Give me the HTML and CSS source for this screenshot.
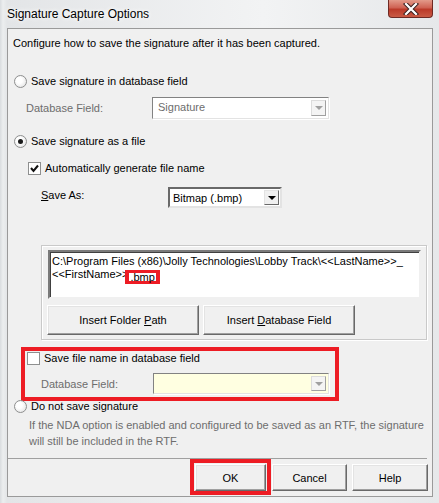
FILE: index.html
```html
<!DOCTYPE html>
<html lang="en">
  <head>
    <meta charset="UTF-8" />
    <title>Signature Capture Options</title>
    <link rel="stylesheet" href="styles.css">
  </head>
  <body>
    <div class="window">
      <div class="titlebar">
        <span class="title">Signature Capture Options</span>
        <div class="closebtn">
          <svg width="16" height="12" viewBox="0 0 16 12">
            <path d="M3 1 L13 11 M13 1 L3 11" stroke="#3a2020" stroke-width="4.2" stroke-linecap="square"/>
            <path d="M3 1 L13 11 M13 1 L3 11" stroke="#fff" stroke-width="2.2" stroke-linecap="square"/>
          </svg>
        </div>
      </div>

      <div class="client">
        <div class="intro">Configure how to save the signature after it has been captured.</div>

        <div class="opt opt1"><span class="radio"></span>Save signature in database field</div>

        <div class="fieldrow dbrow">
          <span class="lbl disabled">Database Field:</span>
          <div class="combo combo-off">
            <span class="val">Signature</span>
            <span class="arrow arrow-off"></span>
          </div>
        </div>

        <div class="opt opt2"><span class="radio on"></span>Save signature as a file</div>

        <div class="chkrow autogen">
          <span class="check">
            <svg width="9" height="9" viewBox="0 0 9 9"><path d="M1 4 L3.5 7 L8 1.5" fill="none" stroke="#111" stroke-width="2"/></svg>
          </span>
          Automatically generate file name
        </div>

        <div class="fieldrow saveas">
          <span class="lbl"><u>S</u>ave As:</span>
          <div class="combo combo-on">
            <span class="val">Bitmap (.bmp)</span>
            <span class="arrow"></span>
          </div>
        </div>

        <div class="group">
          <div class="pathbox">C:\Program Files (x86)\Jolly Technologies\Lobby Track\&lt;&lt;LastName&gt;&gt;_<br>&lt;&lt;FirstName&gt;&gt;<span class="hl">.bmp</span></div>
          <div class="grpbtns">
            <button class="btn wide">Insert Folder <u>P</u>ath</button>
            <button class="btn wide">Insert <u>D</u>atabase Field</button>
          </div>
        </div>

        <div class="redbox dbsave">
          <div class="chkrow"><span class="check"></span>Save file name in database field</div>
          <div class="fieldrow">
            <span class="lbl disabled lbl2">Database Field:</span>
            <div class="combo combo-off combo-yellow">
              <span class="val"></span>
              <span class="arrow arrow-off"></span>
            </div>
          </div>
        </div>

        <div class="opt opt3"><span class="radio"></span>Do not save signature</div>

        <div class="info">If the NDA option is enabled and configured to be saved as an RTF, the signature<br>will still be included in the RTF.</div>

        <div class="sep"></div>

        <div class="footer">
          <div class="redbox okwrap"><button class="btn">OK</button></div>
          <button class="btn cancel">Cancel</button>
          <button class="btn help">Help</button>
        </div>
      </div>
    </div>
  </body>
</html>
```

FILE: styles.css
```css
body {
  margin: 0;
  padding: 0;
  font-family: "Liberation Sans", Arial, sans-serif;
  font-size: 11px;
  color: #000;
}

.window {
  width: 439px;
  height: 503px;
  background: linear-gradient(to right, #d9dcdf 0px, #eceeef 3px, #e3e5e7 7px, #f2f3f4 60%, #e6e8ea 100%);
  overflow: hidden;
}

.titlebar {
  height: 28px;
  display: flex;
  justify-content: space-between;
  align-items: flex-start;
}

.title {
  font-size: 12px;
  margin: 7px 0 0 7px;
  text-shadow: 0 0 6px #fff, 0 0 4px #fff;
}

.closebtn {
  width: 45px;
  height: 18px;
  margin-right: 6px;
  box-sizing: border-box;
  border: 1px solid #6e2a24;
  border-top: none;
  border-radius: 0 0 4px 4px;
  background: linear-gradient(#e39a8a, #cf6253 45%, #bb3a29 55%, #c95a44);
  display: flex;
  align-items: center;
  justify-content: center;
}

.client {
  margin-left: 7px;
  width: 426px;
  height: 469px;
  box-sizing: border-box;
  border: 1px solid #9a9a9a;
  background: #f0f0f0;
}

.intro {
  margin: 7px 0 0 5px;
  line-height: 14px;
}

/* radio rows */
.opt {
  display: flex;
  align-items: center;
  height: 14px;
  margin-left: 6px;
}
.opt1 { margin-top: 24px; }
.opt2 { margin-top: 15px; }
.opt3 { margin-top: -2px; }

.radio {
  width: 11px;
  height: 11px;
  border-radius: 50%;
  border: 1px solid #8e8f8f;
  background: radial-gradient(circle at 40% 40%, #fff 30%, #dcdcdc 100%);
  margin-right: 4px;
  display: flex;
  align-items: center;
  justify-content: center;
}
.radio.on::after {
  content: "";
  width: 5px;
  height: 5px;
  border-radius: 50%;
  background: #1a1a1a;
}

/* check boxes */
.chkrow {
  display: flex;
  align-items: center;
  height: 14px;
}
.autogen {
  margin: 13px 0 0 20px;
}
.check {
  width: 11px;
  height: 11px;
  border: 1px solid #8e8f8f;
  background: #fff;
  margin-right: 4px;
  display: flex;
  align-items: center;
  justify-content: center;
}

/* label + combo rows */
.fieldrow {
  display: flex;
  align-items: center;
}
.dbrow {
  margin: 9px 0 0 18px;
}
.dbrow .lbl { width: 126px; }
.saveas {
  margin: 12px 0 0 33px;
  align-items: flex-start;
}
.saveas .lbl {
  width: 127px;
  margin-top: 2px;
}
.disabled { color: #6d6d6d; }

.combo {
  box-sizing: border-box;
  display: flex;
  align-items: stretch;
  background: #fff;
}
.combo .val {
  flex: 1;
  padding-left: 3px;
  display: flex;
  align-items: center;
}
.combo-off {
  width: 177px;
  height: 22px;
  border: 1px solid #a0a0a0;
  border-color: #828282 #e3e3e3 #e3e3e3 #828282;
  box-shadow: 1px 1px 0 #fff;
  padding: 2px;
}
.combo-off .val {
  color: #6d6d6d;
  margin-top: -3px;
}
.combo-yellow {
  width: 176px;
  height: 21px;
  background: #ffffe1;
}
.combo-on {
  width: 114px;
  height: 21px;
  border: 2px solid;
  border-color: #696969 #e3e3e3 #e3e3e3 #696969;
  padding: 1px;
}
.combo-on .val { padding-left: 2px; }

.arrow {
  width: 15px;
  box-sizing: border-box;
  border: 1px solid;
  border-color: #e3e3e3 #696969 #696969 #e3e3e3;
  background: #f0f0f0;
  display: flex;
  align-items: center;
  justify-content: center;
}
.arrow::after {
  content: "";
  border-left: 4px solid transparent;
  border-right: 4px solid transparent;
  border-top: 4px solid #000;
}
.arrow-off {
  border-color: #dcdcdc #a0a0a0 #a0a0a0 #dcdcdc;
  background: #f4f4f4;
}
.arrow-off::after {
  border-top-color: #a0a0a0;
}

/* file name group */
.group {
  margin: 37px 0 0 33px;
  width: 386px;
  height: 95px;
  box-sizing: border-box;
  border: 1px solid #c9c9c9;
  box-shadow: inset 1px 1px 0 #fff, 1px 1px 0 #fff;
  padding: 4px 0 0 6px;
}
.pathbox {
  width: 373px;
  height: 49px;
  box-sizing: border-box;
  background: #fff;
  border: 2px solid;
  border-color: #7a7a7a #f0f0f0 #f0f0f0 #7a7a7a;
  box-shadow: inset 1px 1px 0 #404040;
  padding: 3px 0 0 2px;
  line-height: 13px;
}
.hl {
  display: inline-block;
  height: 8px;
  line-height: 8px;
  padding: 0 1px;
  border: 3px solid #ed1c24;
  border-left-width: 4px;
  border-right-width: 4px;
  vertical-align: -3px;
  margin-left: -3px;
}
.grpbtns {
  display: flex;
  gap: 4px;
  margin-top: 6px;
  margin-left: -1px;
}

/* buttons */
.btn {
  font-family: "Liberation Sans", Arial, sans-serif;
  font-size: 11px;
  color: #000;
  height: 27px;
  width: 71px;
  padding: 0;
  background: #f0f0f0;
  border: 1px solid;
  border-color: #fff #696969 #696969 #fff;
  box-shadow: inset -1px -1px 0 #a0a0a0, inset 1px 1px 0 #e3e3e3;
}
.btn.wide {
  width: 152px;
  height: 30px;
}

/* red highlight boxes */
.redbox {
  border: 4px solid #ed1c24;
  box-sizing: border-box;
}
.dbsave {
  margin: 7px 0 0 13px;
  width: 318px;
  height: 54px;
  padding: 0 0 0 2px;
}
.dbsave .fieldrow {
  margin: 8px 0 0 14px;
}
.lbl2 { width: 112px; }

.info {
  margin: 4px 0 0 21px;
  line-height: 16px;
  color: #6d6d6d;
}

.sep {
  margin: 9px 5px 0 0;
  border-top: 1px solid #a0a0a0;
}

.footer {
  display: flex;
  align-items: flex-start;
  padding-left: 182px;
}
.okwrap {
  width: 81px;
  height: 36px;
  padding: 1px 0 0 1px;
}
.okwrap .btn {
  width: 71px;
  height: 27px;
}
.cancel {
  margin: 5px 0 0 1px;
  width: 75px;
}
.help {
  margin: 5px 0 0 5px;
  width: 76px;
}
```
